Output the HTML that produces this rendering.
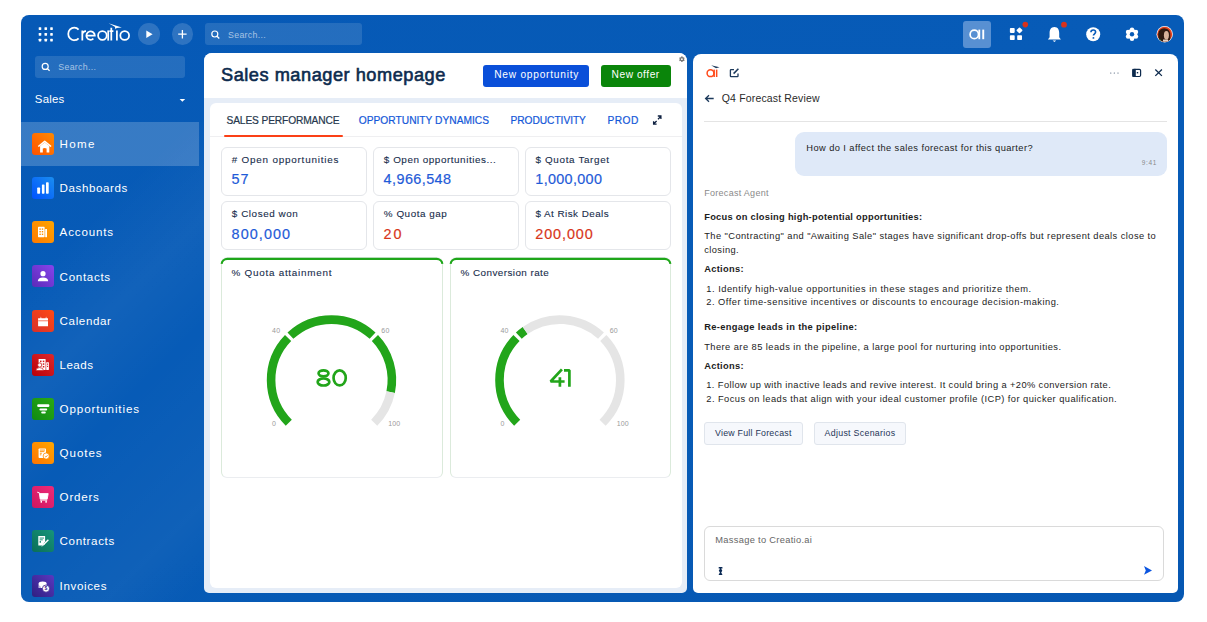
<!DOCTYPE html>
<html><head><meta charset="utf-8">
<style>
*{margin:0;padding:0;box-sizing:border-box;}
html,body{width:1207px;height:622px;overflow:hidden;background:#fff;font-family:"Liberation Sans",sans-serif;}
.a{position:absolute;}
.t{position:absolute;white-space:nowrap;line-height:1;}
svg{position:absolute;overflow:visible;}
</style></head><body>

<div class="a" style="left:21px;top:15px;width:1163px;height:587px;border-radius:8px;background:linear-gradient(165deg,#0659b6 0%,#075bb7 35%,#075bb6 65%,#0657b2 100%);"></div>
<svg style="left:0;top:0" width="1207" height="622"><g fill="#fff"><rect x="38.70" y="27.30" width="2.6" height="2.6" rx="0.4"/><rect x="44.45" y="27.30" width="2.6" height="2.6" rx="0.4"/><rect x="50.20" y="27.30" width="2.6" height="2.6" rx="0.4"/><rect x="38.70" y="33.05" width="2.6" height="2.6" rx="0.4"/><rect x="44.45" y="33.05" width="2.6" height="2.6" rx="0.4"/><rect x="50.20" y="33.05" width="2.6" height="2.6" rx="0.4"/><rect x="38.70" y="38.80" width="2.6" height="2.6" rx="0.4"/><rect x="44.45" y="38.80" width="2.6" height="2.6" rx="0.4"/><rect x="50.20" y="38.80" width="2.6" height="2.6" rx="0.4"/></g></svg>
<svg style="left:0;top:0" width="1207" height="60"><g fill="none" stroke="#fff" stroke-width="1.75"><path d="M78.6 29.6 A6 6.3 0 1 0 78.6 38.3"/><path d="M82.3 40.6 L82.3 30.6 M82.3 34.6 Q82.8 31 86 31"/><path d="M86.5 35.5 L94.8 35.5 A4.2 4.2 0 1 0 93.4 38.7"/><circle cx="102.4" cy="35.5" r="4.3"/><path d="M108.2 30.4 L108.2 40.6"/><path d="M111.3 27.8 L111.3 40.6 M109.4 31.2 L113.4 31.2"/><path d="M116.9 30.6 L116.9 40.6"/><circle cx="124.7" cy="35.5" r="4.4"/></g><path d="M108.6 23.2 L121.8 27.4 L116.6 27.9 L115.6 29.2 L114.8 26.8 Z" fill="#fff"/></svg>
<div class="a" style="left:138.4px;top:23.4px;width:21.6px;height:21.6px;border-radius:50%;background:rgba(255,255,255,0.16);"></div>
<svg style="left:0;top:0" width="1207" height="60"><path d="M146.3 30.4 L152.6 34.2 L146.3 38 Z" fill="#fff"/></svg>
<div class="a" style="left:171.6px;top:23.4px;width:21.6px;height:21.6px;border-radius:50%;background:rgba(255,255,255,0.16);"></div>
<svg style="left:0;top:0" width="1207" height="60"><path d="M182.4 30 V38.4 M178.2 34.2 H186.6" stroke="#fff" stroke-width="1.3"/></svg>
<div class="a" style="left:205px;top:23.4px;width:157px;height:21.700000000000003px;border-radius:3px;background:rgba(255,255,255,0.12);"></div>
<svg style="left:0;top:0" width="1207" height="60"><circle cx="214.8" cy="34" r="3" fill="none" stroke="#fff" stroke-width="1.2"/><path d="M217 36.2 L219.3 38.5" stroke="#fff" stroke-width="1.3"/></svg>
<div class="t" style="left:228.00px;top:30.75px;font-size:8.8px;color:rgba(255,255,255,0.6);font-weight:400;letter-spacing:0.321px;">Search...</div>
<div class="a" style="left:963.3px;top:20.5px;width:27.5px;height:27.200000000000003px;border-radius:3px;background:#5890d2;"></div>
<svg style="left:0;top:0" width="1207" height="60"><circle cx="974.3" cy="34.4" r="4.2" fill="none" stroke="#fff" stroke-width="1.7"/><rect x="978.4" y="29.6" width="1.8" height="9.6" fill="#fff"/><rect x="982.3" y="29.6" width="1.9" height="9.6" fill="#fff"/></svg>
<svg style="left:0;top:0" width="1207" height="60"><g fill="#fff"><rect x="1009.9" y="28.1" width="4.8" height="4.8" rx="0.8"/><rect x="1009.9" y="35.3" width="4.8" height="4.8" rx="0.8"/><rect x="1017.2" y="35.3" width="4.8" height="4.8" rx="0.8"/><rect x="1017.1" y="28.1" width="4.6" height="4.6" rx="0.8" transform="rotate(45 1019.5 30.5)"/></g><circle cx="1025.3" cy="24.6" r="2.8" fill="#d8321c"/></svg>
<svg style="left:0;top:0" width="1207" height="60"><path d="M1054.4 27 C1050.9 27 1049.6 29.8 1049.6 33 L1049.6 37.3 L1047.9 39.6 L1060.9 39.6 L1059.2 37.3 L1059.2 33 C1059.2 29.8 1057.9 27 1054.4 27 Z" fill="#fff"/><path d="M1052.6 40.4 L1056.2 40.4 L1054.4 42 Z" fill="#fff"/><circle cx="1064" cy="24.7" r="2.9" fill="#d8321c"/></svg>
<svg style="left:0;top:0" width="1207" height="60"><circle cx="1093.2" cy="34.2" r="7" fill="#fff"/><path d="M1090.9 32.3 C1090.9 30.8 1092 30 1093.3 30 C1094.7 30 1095.6 30.9 1095.6 32.1 C1095.6 33.7 1093.4 33.9 1093.4 35.6" fill="none" stroke="#0a5cba" stroke-width="1.6"/><circle cx="1093.4" cy="37.9" r="0.95" fill="#0a5cba"/></svg>
<svg style="left:0;top:0" width="1207" height="60"><g fill="#fff"><circle cx="1132" cy="34.2" r="5.1"/><circle cx="1132.00" cy="38.75" r="2.25"/><circle cx="1128.06" cy="36.48" r="2.25"/><circle cx="1128.06" cy="31.93" r="2.25"/><circle cx="1132.00" cy="29.65" r="2.25"/><circle cx="1135.94" cy="31.93" r="2.25"/><circle cx="1135.94" cy="36.48" r="2.25"/></g><circle cx="1132" cy="34.2" r="2.2" fill="#075ab6"/></svg>
<svg style="left:0;top:0" width="1207" height="60"><defs><clipPath id="av"><circle cx="1164.7" cy="34.2" r="7.5"/></clipPath></defs><circle cx="1164.7" cy="34.2" r="8.2" fill="#f2f2f2"/><g clip-path="url(#av)"><rect x="1156" y="26" width="18" height="18" fill="#e2401c"/><path d="M1158.6 42 L1158.2 34 Q1159 28.6 1164.2 28.3 Q1169 28.6 1170.2 33 L1170.6 42 Z" fill="#2e1a12"/><ellipse cx="1166.4" cy="35.2" rx="2.5" ry="4.3" fill="#d8b39c"/><path d="M1156 38.5 L1160.5 39.5 L1162.5 44 L1156 44 Z" fill="#1f9a3c"/><path d="M1156 37 L1159 38.2 L1157.5 40 L1156 40Z" fill="#f4e8e0"/><path d="M1168.5 41 L1172 39.5 L1172 44 L1168 44Z" fill="#1f9a3c"/><rect x="1163" y="39.5" width="5" height="5" fill="#e8d2c4"/></g></svg>
<div class="a" style="left:35px;top:56px;width:150px;height:21.599999999999994px;border-radius:3px;background:rgba(255,255,255,0.12);"></div>
<svg style="left:0;top:0" width="1207" height="120"><circle cx="45.2" cy="66.4" r="3" fill="none" stroke="#fff" stroke-width="1.2"/><path d="M47.4 68.6 L49.6 70.8" stroke="#fff" stroke-width="1.3"/></svg>
<div class="t" style="left:58.30px;top:62.75px;font-size:8.8px;color:rgba(255,255,255,0.6);font-weight:400;letter-spacing:0.308px;">Search...</div>
<div class="t" style="left:34.80px;top:94.45px;font-size:11.4px;color:#fff;font-weight:400;letter-spacing:0.233px;">Sales</div>
<svg style="left:0;top:0" width="1207" height="120"><path d="M179.6 99 L185.2 99 L182.4 101.8 Z" fill="#fff"/></svg>
<div class="a" style="left:21px;top:122px;width:183px;height:480px;border-radius:0 0 0 8px;background:linear-gradient(135deg,rgba(255,255,255,0) 25%,rgba(255,255,255,0.045) 42%,rgba(255,255,255,0) 58%,rgba(255,255,255,0.035) 85%,rgba(255,255,255,0) 97%);"></div>
<div class="a" style="left:21px;top:122px;width:178px;height:44px;background:rgba(255,255,255,0.2);"></div>
<div class="a" style="left:32px;top:133.00px;width:22px;height:22px;border-radius:3px;background:linear-gradient(45deg,#ff5200,#ff8a00);"></div>
<svg style="left:32px;top:133.00px" width="22" height="22" viewBox="0 0 22 22"><path d="M6.3 13.5 L12.7 8.3 L19.1 13.5" fill="none" stroke="#fff" stroke-width="1.6" stroke-linejoin="round"/><path d="M8.1 13 L12.7 9.6 L17.3 13 L17.3 19.6 L14.6 19.6 L14.6 15.6 Q12.7 14.4 10.8 15.6 L10.8 19.6 L8.1 19.6 Z" fill="#fff"/></svg>
<div class="t" style="left:59.60px;top:138.08px;font-size:11.6px;color:#fff;font-weight:400;letter-spacing:1.274px;">Home</div>
<div class="a" style="left:32px;top:177.15px;width:22px;height:22px;border-radius:3px;background:linear-gradient(45deg,#0052ff,#1a8ef0);"></div>
<svg style="left:32px;top:177.15px" width="22" height="22" viewBox="0 0 22 22"><g fill="#fff"><rect x="5.2" y="10.6" width="2.9" height="6.2" rx="0.7"/><rect x="9.9" y="7.4" width="2.6" height="9.4" rx="0.7"/><rect x="14" y="5.2" width="2.7" height="11.6" rx="0.7"/></g></svg>
<div class="t" style="left:59.60px;top:182.23px;font-size:11.6px;color:#fff;font-weight:400;letter-spacing:0.571px;">Dashboards</div>
<div class="a" style="left:32px;top:221.30px;width:22px;height:22px;border-radius:3px;background:linear-gradient(45deg,#ff7a00,#ffa500);"></div>
<svg style="left:32px;top:221.30px" width="22" height="22" viewBox="0 0 22 22"><rect x="6" y="5.8" width="6.6" height="10.4" rx="0.6" fill="#fff"/><g fill="#ff9000"><rect x="7.4" y="7.4" width="1.4" height="1.4"/><rect x="9.8" y="7.4" width="1.4" height="1.4"/><rect x="7.4" y="10" width="1.4" height="1.4"/><rect x="9.8" y="10" width="1.4" height="1.4"/><rect x="7.4" y="12.6" width="1.4" height="1.4"/><rect x="9.8" y="12.6" width="1.4" height="1.4"/></g><rect x="13.2" y="8" width="1.8" height="8.2" fill="#fff"/></svg>
<div class="t" style="left:59.60px;top:226.38px;font-size:11.6px;color:#fff;font-weight:400;letter-spacing:0.824px;">Accounts</div>
<div class="a" style="left:32px;top:265.45px;width:22px;height:22px;border-radius:3px;background:linear-gradient(45deg,#5a2bb8,#8744ec);"></div>
<svg style="left:32px;top:265.45px" width="22" height="22" viewBox="0 0 22 22"><circle cx="11" cy="8.7" r="2.6" fill="#fff"/><path d="M5.8 16.2 Q5.8 12.4 11 12.4 Q16.2 12.4 16.2 16.2 Z" fill="#fff"/></svg>
<div class="t" style="left:59.60px;top:270.53px;font-size:11.6px;color:#fff;font-weight:400;letter-spacing:0.685px;">Contacts</div>
<div class="a" style="left:32px;top:309.60px;width:22px;height:22px;border-radius:3px;background:linear-gradient(45deg,#d8302a,#ff4a14);"></div>
<svg style="left:32px;top:309.60px" width="22" height="22" viewBox="0 0 22 22"><path d="M6.1 8.2 L8.4 8.2 L8.9 6.6 L9.4 8.2 L13.6 8.2 L14.1 6.6 L14.6 8.2 L16 8.2 L16 16.2 L6.1 16.2 Z" fill="#fff"/><rect x="6.1" y="10" width="9.9" height="1.4" fill="#f7a090"/></svg>
<div class="t" style="left:59.60px;top:314.68px;font-size:11.6px;color:#fff;font-weight:400;letter-spacing:0.616px;">Calendar</div>
<div class="a" style="left:32px;top:353.75px;width:22px;height:22px;border-radius:3px;background:linear-gradient(45deg,#b8000a,#e0282a);"></div>
<svg style="left:32px;top:353.75px" width="22" height="22" viewBox="0 0 22 22"><rect x="6.6" y="5" width="7" height="11" rx="0.6" fill="#fff"/><rect x="14.2" y="8.2" width="2.7" height="7.8" rx="0.4" fill="#fff"/><g fill="#d01c1c"><rect x="8" y="6.6" width="1.5" height="1.5"/><rect x="10.8" y="6.6" width="1.5" height="1.5"/><rect x="10.8" y="9.3" width="1.5" height="1.5"/><rect x="10.8" y="12" width="1.5" height="1.5"/><rect x="15" y="9.6" width="1.1" height="1.1"/><rect x="15" y="11.8" width="1.1" height="1.1"/></g><circle cx="7.7" cy="11" r="2.1" fill="#fff" stroke="#cc1a1a" stroke-width="0.8"/><path d="M3.9 16.6 Q4 13.6 7.7 13.6 Q11.4 13.6 11.5 16.6 Z" fill="#fff" stroke="#cc1a1a" stroke-width="0.7"/></svg>
<div class="t" style="left:59.60px;top:358.83px;font-size:11.6px;color:#fff;font-weight:400;letter-spacing:0.439px;">Leads</div>
<div class="a" style="left:32px;top:397.90px;width:22px;height:22px;border-radius:3px;background:linear-gradient(45deg,#108a14,#2aaa14);"></div>
<svg style="left:32px;top:397.90px" width="22" height="22" viewBox="0 0 22 22"><g fill="#fff"><rect x="5.2" y="6.2" width="12.2" height="2.8" rx="1.2"/><rect x="7.4" y="10.4" width="7.8" height="2" rx="1"/><rect x="9.2" y="13.6" width="4.6" height="1.8" rx="0.9"/></g></svg>
<div class="t" style="left:59.60px;top:402.98px;font-size:11.6px;color:#fff;font-weight:400;letter-spacing:0.874px;">Opportunities</div>
<div class="a" style="left:32px;top:442.05px;width:22px;height:22px;border-radius:3px;background:linear-gradient(45deg,#ff7300,#ffa800);"></div>
<svg style="left:32px;top:442.05px" width="22" height="22" viewBox="0 0 22 22"><rect x="6.6" y="6.4" width="7.4" height="9.6" rx="0.8" fill="#fff"/><g fill="#ff9000"><rect x="7.8" y="7.6" width="5.2" height="0.9"/><rect x="7.8" y="9.2" width="4.6" height="0.9"/><rect x="7.8" y="10.8" width="2" height="0.9"/><rect x="7.8" y="12.4" width="1.6" height="0.9"/></g><circle cx="14.2" cy="14" r="3.1" fill="#fff" stroke="#ff8a00" stroke-width="0.8"/><path d="M12.8 14.1 L13.9 15.1 L15.6 13.1" fill="none" stroke="#ff8a00" stroke-width="0.8"/></svg>
<div class="t" style="left:59.60px;top:447.13px;font-size:11.6px;color:#fff;font-weight:400;letter-spacing:0.916px;">Quotes</div>
<div class="a" style="left:32px;top:486.20px;width:22px;height:22px;border-radius:3px;background:linear-gradient(45deg,#cc1660,#f02a78);"></div>
<svg style="left:32px;top:486.20px" width="22" height="22" viewBox="0 0 22 22"><path d="M5.2 6.2 L7.3 6.8 L8.2 13.2 L15.2 13.2 L16.2 7.6 L7.8 7.6" fill="#fff" stroke="#fff" stroke-width="0.9" stroke-linejoin="round"/><rect x="8.6" y="14.3" width="1.4" height="2.4" fill="#fff"/><rect x="13.4" y="14.3" width="1.4" height="2.4" fill="#fff"/><rect x="8" y="14" width="7.2" height="0.8" fill="#f8b8d0"/></svg>
<div class="t" style="left:59.60px;top:491.28px;font-size:11.6px;color:#fff;font-weight:400;letter-spacing:0.764px;">Orders</div>
<div class="a" style="left:32px;top:530.35px;width:22px;height:22px;border-radius:3px;background:linear-gradient(45deg,#0a6e58,#17957a);"></div>
<svg style="left:32px;top:530.35px" width="22" height="22" viewBox="0 0 22 22"><path d="M6.3 6 L13.1 6 L13.1 11.6 L10.4 15.4 L6.3 15.4 Z" fill="#fff"/><g fill="#148a6e"><rect x="7.6" y="7.6" width="4.4" height="0.9"/><rect x="7.6" y="9.4" width="3.2" height="0.9"/><rect x="7.6" y="11.1" width="1.4" height="1.6"/></g><path d="M11.4 14.8 L16.4 9.8" stroke="#fff" stroke-width="1.4"/><path d="M10 16.4 L12.4 14" stroke="#fff" stroke-width="1"/></svg>
<div class="t" style="left:59.60px;top:535.43px;font-size:11.6px;color:#fff;font-weight:400;letter-spacing:0.630px;">Contracts</div>
<div class="a" style="left:32px;top:574.50px;width:22px;height:22px;border-radius:3px;background:linear-gradient(45deg,#2f1f80,#5a38c0);"></div>
<svg style="left:32px;top:574.50px" width="22" height="22" viewBox="0 0 22 22"><path d="M6.6 8.6 Q6.6 6.6 10.6 6.6 Q14.6 6.6 14.6 8.6 L14.6 13 L6.6 13 Z" fill="#fff"/><path d="M6.6 10.4 L9 12.6 M6.6 12.2 L8 13.2" stroke="#4a2ca6" stroke-width="0.5"/><circle cx="14" cy="13.6" r="3.6" fill="#fff" stroke="#3c248f" stroke-width="0.8"/><text x="12.6" y="15.4" font-size="5" font-weight="bold" fill="#3c248f" font-family="Liberation Sans">$</text></svg>
<div class="t" style="left:59.60px;top:579.58px;font-size:11.6px;color:#fff;font-weight:400;letter-spacing:0.617px;">Invoices</div>
<div class="a" style="left:204px;top:53.4px;width:483.20000000000005px;height:539.6px;border-radius:8px 8px 5px 5px;background:#e6edf7;"></div>
<div class="a" style="left:204px;top:53.4px;width:483.20000000000005px;height:44.4px;border-radius:8px 8px 0 0;background:#fff;"></div>
<div class="t" style="left:221.00px;top:66.09px;font-size:18.2px;color:#0d2b4e;font-weight:400;letter-spacing:0.522px;-webkit-text-stroke:0.6px #0d2b4e;">Sales manager homepage</div>
<div class="a" style="left:483.3px;top:65px;width:106.09999999999997px;height:21.5px;border-radius:3px;background:#0a4fd9;"></div>
<div class="t" style="left:494.20px;top:70.46px;font-size:10.2px;color:#fff;font-weight:400;letter-spacing:0.756px;">New opportunity</div>
<div class="a" style="left:600.6px;top:65px;width:70.29999999999995px;height:21.5px;border-radius:3px;background:#0a850a;"></div>
<div class="t" style="left:611.60px;top:70.46px;font-size:10.2px;color:#fff;font-weight:400;letter-spacing:0.526px;">New offer</div>
<svg style="left:0;top:0" width="1207" height="100"><g fill="#777"><circle cx="681.9" cy="59.2" r="2.1"/><rect x="681.2" y="56.4" width="1.4" height="1.4" transform="rotate(0 681.9 59.2)"/><rect x="681.2" y="56.4" width="1.4" height="1.4" transform="rotate(60 681.9 59.2)"/><rect x="681.2" y="56.4" width="1.4" height="1.4" transform="rotate(120 681.9 59.2)"/><rect x="681.2" y="56.4" width="1.4" height="1.4" transform="rotate(180 681.9 59.2)"/><rect x="681.2" y="56.4" width="1.4" height="1.4" transform="rotate(240 681.9 59.2)"/><rect x="681.2" y="56.4" width="1.4" height="1.4" transform="rotate(300 681.9 59.2)"/></g><circle cx="681.9" cy="59.2" r="0.9" fill="#fff"/></svg>
<div class="a" style="left:209.7px;top:103px;width:472.59999999999997px;height:485px;border-radius:6px;background:#fff;"></div>
<div class="t" style="left:226.50px;top:115.66px;font-size:10.2px;color:#26374d;font-weight:400;letter-spacing:-0.119px;-webkit-text-stroke:0.2px #26374d;">SALES PERFORMANCE</div>
<div class="t" style="left:358.80px;top:115.66px;font-size:10.2px;color:#1357d8;font-weight:400;letter-spacing:0.021px;-webkit-text-stroke:0.2px #1357d8;">OPPORTUNITY DYNAMICS</div>
<div class="t" style="left:510.50px;top:115.66px;font-size:10.2px;color:#1357d8;font-weight:400;letter-spacing:-0.040px;-webkit-text-stroke:0.2px #1357d8;">PRODUCTIVITY</div>
<div class="t" style="left:607.50px;top:115.66px;font-size:10.2px;color:#1357d8;font-weight:400;letter-spacing:0.457px;-webkit-text-stroke:0.2px #1357d8;">PROD</div>
<svg style="left:0;top:0" width="1207" height="140"><path d="M653.8 123.8 L656.6 121 M653.6 121.2 L653.6 124.2 L656.6 124.2 M660.8 116.4 L658 119.2 M657.8 116 L660.9 116 L660.9 119" fill="none" stroke="#0e2040" stroke-width="1.3"/></svg>
<div class="a" style="left:209.7px;top:136px;width:472.59999999999997px;height:1px;background:#efeff1;"></div>
<div class="a" style="left:224px;top:135px;width:119px;height:2px;background:#fb4016;border-radius:1px;"></div>
<div class="a" style="left:221.3px;top:147px;width:145.7px;height:49px;border:1px solid #e4e6ea;border-radius:6px;background:#fff;"></div>
<div class="t" style="left:231.80px;top:154.82px;font-size:9.9px;color:#172d4b;font-weight:400;letter-spacing:0.784px;-webkit-text-stroke:0.1px #172d4b;"># Open opportunities</div>
<div class="t" style="left:231.60px;top:171.81px;font-size:14.4px;color:#1f5bd8;font-weight:400;letter-spacing:0.929px;-webkit-text-stroke:0.2px #1f5bd8;">57</div>
<div class="a" style="left:373.3px;top:147px;width:145.7px;height:49px;border:1px solid #e4e6ea;border-radius:6px;background:#fff;"></div>
<div class="t" style="left:383.80px;top:154.82px;font-size:9.9px;color:#172d4b;font-weight:400;letter-spacing:0.548px;-webkit-text-stroke:0.1px #172d4b;">$ Open opportunities...</div>
<div class="t" style="left:383.60px;top:171.81px;font-size:14.4px;color:#1f5bd8;font-weight:400;letter-spacing:0.427px;-webkit-text-stroke:0.2px #1f5bd8;">4,966,548</div>
<div class="a" style="left:525px;top:147px;width:145.70000000000005px;height:49px;border:1px solid #e4e6ea;border-radius:6px;background:#fff;"></div>
<div class="t" style="left:535.50px;top:154.82px;font-size:9.9px;color:#172d4b;font-weight:400;letter-spacing:0.649px;-webkit-text-stroke:0.1px #172d4b;">$ Quota Target</div>
<div class="t" style="left:535.30px;top:171.81px;font-size:14.4px;color:#1f5bd8;font-weight:400;letter-spacing:0.327px;-webkit-text-stroke:0.2px #1f5bd8;">1,000,000</div>
<div class="a" style="left:221.3px;top:201px;width:145.7px;height:49px;border:1px solid #e4e6ea;border-radius:6px;background:#fff;"></div>
<div class="t" style="left:231.80px;top:208.62px;font-size:9.9px;color:#172d4b;font-weight:400;letter-spacing:0.559px;-webkit-text-stroke:0.1px #172d4b;">$ Closed won</div>
<div class="t" style="left:231.60px;top:226.61px;font-size:14.4px;color:#1f5bd8;font-weight:400;letter-spacing:1.069px;-webkit-text-stroke:0.2px #1f5bd8;">800,000</div>
<div class="a" style="left:373.3px;top:201px;width:145.7px;height:49px;border:1px solid #e4e6ea;border-radius:6px;background:#fff;"></div>
<div class="t" style="left:383.80px;top:208.62px;font-size:9.9px;color:#172d4b;font-weight:400;letter-spacing:0.534px;-webkit-text-stroke:0.1px #172d4b;">% Quota gap</div>
<div class="t" style="left:383.60px;top:226.61px;font-size:14.4px;color:#d8361a;font-weight:400;letter-spacing:1.929px;-webkit-text-stroke:0.2px #d8361a;">20</div>
<div class="a" style="left:525px;top:201px;width:145.70000000000005px;height:49px;border:1px solid #e4e6ea;border-radius:6px;background:#fff;"></div>
<div class="t" style="left:535.50px;top:208.62px;font-size:9.9px;color:#172d4b;font-weight:400;letter-spacing:0.445px;-webkit-text-stroke:0.1px #172d4b;">$ At Risk Deals</div>
<div class="t" style="left:535.30px;top:226.61px;font-size:14.4px;color:#d8361a;font-weight:400;letter-spacing:0.902px;-webkit-text-stroke:0.2px #d8361a;">200,000</div>
<div class="a" style="left:221px;top:257px;width:222px;height:221px;border:1px solid #ebedf0;border-left-color:#dbeadb;border-right-color:#dbeadb;border-radius:6px;background:#fff;"></div>
<svg style="left:0;top:0" width="1207" height="622"><path d="M221.6 263.8 A5.8 5.8 0 0 1 227.4 258.9 L436.6 258.9 A5.8 5.8 0 0 1 442.4 263.8" fill="none" stroke="#1ea619" stroke-width="2.1"/></svg>
<div class="t" style="left:231.60px;top:267.92px;font-size:9.9px;color:#172d4b;font-weight:400;letter-spacing:0.736px;-webkit-text-stroke:0.1px #172d4b;">% Quota attainment</div>
<svg style="left:0;top:0" width="1207" height="622"><path d="M288.79 422.71 A60.4 60.4 0 0 1 288.09 338.00" fill="none" stroke="#22a51a" stroke-width="8.6"/><path d="M290.42 335.72 A60.4 60.4 0 0 1 372.58 335.72" fill="none" stroke="#22a51a" stroke-width="8.6"/><path d="M374.91 338.00 A60.4 60.4 0 0 1 390.67 392.15" fill="none" stroke="#22a51a" stroke-width="8.6"/><path d="M390.67 392.15 A60.4 60.4 0 0 1 374.21 422.71" fill="none" stroke="#e5e5e5" stroke-width="8.6"/></svg>
<div class="t" style="left:272.10px;top:326.57px;font-size:7px;color:#9a9a9a;font-weight:400;letter-spacing:0.200px;">40</div>
<div class="t" style="left:381.30px;top:326.57px;font-size:7px;color:#9a9a9a;font-weight:400;letter-spacing:0.200px;">60</div>
<div class="t" style="left:272.10px;top:419.87px;font-size:7px;color:#9a9a9a;font-weight:400;letter-spacing:0.000px;">0</div>
<div class="t" style="left:388.30px;top:419.87px;font-size:7px;color:#9a9a9a;font-weight:400;letter-spacing:0.100px;">100</div>
<svg style="left:0;top:0" width="1207" height="622"><g fill="none" stroke="#22a51a" stroke-width="2.7"><ellipse cx="323.5" cy="373.35" rx="4.95" ry="3.05"/><ellipse cx="323.5" cy="382" rx="5.85" ry="3.5"/><ellipse cx="339.65" cy="377.9" rx="6.1" ry="7.55"/></g></svg>
<div class="a" style="left:450px;top:257px;width:221px;height:221px;border:1px solid #ebedf0;border-left-color:#dbeadb;border-right-color:#dbeadb;border-radius:6px;background:#fff;"></div>
<svg style="left:0;top:0" width="1207" height="622"><path d="M450.6 263.8 A5.8 5.8 0 0 1 456.4 258.9 L664.6 258.9 A5.8 5.8 0 0 1 670.4 263.8" fill="none" stroke="#1ea619" stroke-width="2.1"/></svg>
<div class="t" style="left:460.60px;top:267.92px;font-size:9.9px;color:#172d4b;font-weight:400;letter-spacing:0.434px;-webkit-text-stroke:0.1px #172d4b;">% Conversion rate</div>
<svg style="left:0;top:0" width="1207" height="622"><path d="M517.19 422.71 A60.4 60.4 0 0 1 516.49 338.00" fill="none" stroke="#22a51a" stroke-width="8.6"/><path d="M518.82 335.72 A60.4 60.4 0 0 1 525.17 330.58" fill="none" stroke="#22a51a" stroke-width="8.6"/><path d="M525.17 330.58 A60.4 60.4 0 0 1 600.98 335.72" fill="none" stroke="#e5e5e5" stroke-width="8.6"/><path d="M603.31 338.00 A60.4 60.4 0 0 1 602.61 422.71" fill="none" stroke="#e5e5e5" stroke-width="8.6"/></svg>
<div class="t" style="left:500.50px;top:326.57px;font-size:7px;color:#9a9a9a;font-weight:400;letter-spacing:0.200px;">40</div>
<div class="t" style="left:609.70px;top:326.57px;font-size:7px;color:#9a9a9a;font-weight:400;letter-spacing:0.200px;">60</div>
<div class="t" style="left:500.50px;top:419.87px;font-size:7px;color:#9a9a9a;font-weight:400;letter-spacing:0.000px;">0</div>
<div class="t" style="left:616.70px;top:419.87px;font-size:7px;color:#9a9a9a;font-weight:400;letter-spacing:0.100px;">100</div>
<svg style="left:0;top:0" width="1207" height="622"><g fill="none" stroke="#22a51a" stroke-width="2.7" stroke-linejoin="bevel"><path d="M561.9 369.4 L550.6 381.5 L564.6 381.5 M559.9 377.2 L559.9 386.8 M564 370.3 L569.4 370.3 L569.4 386.8"/></g></svg>
<div class="a" style="left:693px;top:53.5px;width:484.79999999999995px;height:539.5px;border-radius:8px 8px 5px 5px;background:#fff;"></div>
<svg style="left:0;top:0" width="1207" height="110"><circle cx="710.5" cy="73.2" r="3.4" fill="none" stroke="#ff4a1a" stroke-width="1.5"/><rect x="713.4" y="69.6" width="1.5" height="7.4" fill="#ff4a1a"/><rect x="715.9" y="69.6" width="1.5" height="7.4" fill="#ff4a1a"/><path d="M711.2 65.2 L719.5 67.2 L716 68.2 Z" fill="#1d3a5c"/></svg>
<svg style="left:0;top:0" width="1207" height="110"><path d="M734 69.6 L731 69.6 Q730.4 69.6 730.4 70.2 L730.4 76 Q730.4 76.6 731 76.6 L737.4 76.6 Q738 76.6 738 76 L738 73.4" fill="none" stroke="#1d3a5c" stroke-width="1.3"/><path d="M733.6 73.6 L738.4 68.8" stroke="#1d3a5c" stroke-width="1.6"/></svg>
<svg style="left:0;top:0" width="1207" height="110"><g fill="#3a4f6a"><circle cx="1110.8" cy="73" r="0.6"/><circle cx="1114.3" cy="73" r="0.6"/><circle cx="1118" cy="73" r="0.6"/></g><rect x="1132.8" y="69.3" width="7.8" height="7.2" rx="1.2" fill="none" stroke="#0e2b4e" stroke-width="1.2"/><rect x="1132.4" y="68.9" width="3.4" height="8" fill="#0e2b4e"/><rect x="1136.8" y="72" width="1.4" height="1.4" fill="#0e2b4e"/><path d="M1155.3 69.5 L1161.9 75.9 M1161.9 69.5 L1155.3 75.9" stroke="#0e2b4e" stroke-width="1.3"/></svg>
<svg style="left:0;top:0" width="1207" height="110"><path d="M713.7 98.5 L705.8 98.5 M709 95.2 L705.6 98.5 L709 101.8" fill="none" stroke="#1d3a5c" stroke-width="1.3"/></svg>
<div class="t" style="left:721.80px;top:93.21px;font-size:10.5px;color:#2a2a2a;font-weight:400;letter-spacing:0.155px;">Q4 Forecast Review</div>
<div class="a" style="left:704px;top:120.5px;width:463px;height:1.0px;background:#e4e4e4;"></div>
<div class="a" style="left:795px;top:132.1px;width:371.70000000000005px;height:44.30000000000001px;border-radius:9px;background:#dfe9f8;"></div>
<div class="t" style="left:806.30px;top:144.33px;font-size:9.3px;color:#1c1c1c;font-weight:400;letter-spacing:0.418px;">How do I affect the sales forecast for this quarter?</div>
<div class="t" style="left:1141.80px;top:159.90px;font-size:6.5px;color:#8a8a8a;font-weight:400;letter-spacing:0.662px;">9:41</div>
<div class="t" style="left:704.20px;top:188.68px;font-size:9px;color:#8a8a8a;font-weight:400;letter-spacing:0.289px;">Forecast Agent</div>
<div class="t" style="left:704.20px;top:212.53px;font-size:9.3px;color:#1c1c1c;font-weight:700;letter-spacing:0.275px;">Focus on closing high-potential opportunities:</div>
<div class="t" style="left:704.20px;top:231.53px;font-size:9.3px;color:#1c1c1c;font-weight:400;letter-spacing:0.433px;">The "Contracting" and "Awaiting Sale" stages have significant drop-offs but represent deals close to</div>
<div class="t" style="left:704.20px;top:246.13px;font-size:9.3px;color:#1c1c1c;font-weight:400;letter-spacing:0.420px;">closing.</div>
<div class="t" style="left:704.20px;top:265.13px;font-size:9.3px;color:#1c1c1c;font-weight:700;letter-spacing:0.300px;">Actions:</div>
<div class="t" style="left:706.30px;top:284.93px;font-size:9.3px;color:#1c1c1c;font-weight:400;letter-spacing:0.505px;">1. Identify high-value opportunities in these stages and prioritize them.</div>
<div class="t" style="left:706.30px;top:298.23px;font-size:9.3px;color:#1c1c1c;font-weight:400;letter-spacing:0.481px;">2. Offer time-sensitive incentives or discounts to encourage decision-making.</div>
<div class="t" style="left:704.20px;top:323.13px;font-size:9.3px;color:#1c1c1c;font-weight:700;letter-spacing:0.350px;">Re-engage leads in the pipeline:</div>
<div class="t" style="left:704.20px;top:342.53px;font-size:9.3px;color:#1c1c1c;font-weight:400;letter-spacing:0.449px;">There are 85 leads in the pipeline, a large pool for nurturing into opportunities.</div>
<div class="t" style="left:704.20px;top:362.43px;font-size:9.3px;color:#1c1c1c;font-weight:700;letter-spacing:0.300px;">Actions:</div>
<div class="t" style="left:706.30px;top:381.23px;font-size:9.3px;color:#1c1c1c;font-weight:400;letter-spacing:0.398px;">1. Follow up with inactive leads and revive interest. It could bring a +20% conversion rate.</div>
<div class="t" style="left:706.30px;top:395.13px;font-size:9.3px;color:#1c1c1c;font-weight:400;letter-spacing:0.445px;">2. Focus on leads that align with your ideal customer profile (ICP) for quicker qualification.</div>
<div class="a" style="left:704.3px;top:422.3px;width:98.30000000000007px;height:23.19999999999999px;border:1px solid #e0e5ec;border-radius:3px;background:#f6f8fc;"></div>
<div class="t" style="left:715.00px;top:429.35px;font-size:8.8px;color:#1d3557;font-weight:400;letter-spacing:0.246px;">View Full Forecast</div>
<div class="a" style="left:814px;top:422.3px;width:91.79999999999995px;height:23.19999999999999px;border:1px solid #e0e5ec;border-radius:3px;background:#f6f8fc;"></div>
<div class="t" style="left:824.60px;top:429.35px;font-size:8.8px;color:#1d3557;font-weight:400;letter-spacing:0.298px;">Adjust Scenarios</div>
<div class="a" style="left:704.3px;top:526.4px;width:459.4000000000001px;height:55.0px;border:1px solid #dadada;border-radius:6px;background:#fff;"></div>
<div class="t" style="left:715.20px;top:535.93px;font-size:9.3px;color:#666;font-weight:400;letter-spacing:0.315px;">Massage to Creatio.ai</div>
<svg style="left:0;top:0" width="1207" height="622"><g fill="#0b2a55"><rect x="718.6" y="567" width="3.9" height="1.5" rx="0.5"/><rect x="719.9" y="568" width="1.3" height="6"/><circle cx="720.55" cy="570.6" r="1.6"/><path d="M718.6 574.9 L722.5 574.9 L721.2 572.6 L719.9 572.6 Z"/></g><path d="M1144 566 L1152 570.4 L1144 574.8 L1145.8 570.4 Z" fill="#0b55e0"/></svg>
</body></html>
